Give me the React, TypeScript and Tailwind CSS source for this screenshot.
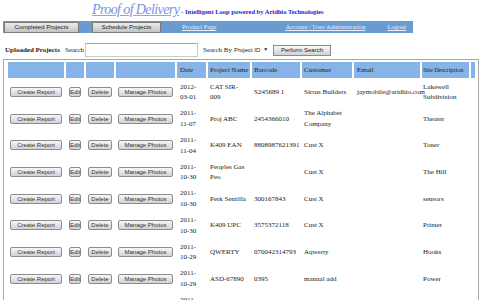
const serif = { fontFamily: '"Liberation Serif", "Times New Roman", serif' }

const projects = [
  { date: '2012-03-01', name: 'CAT SIR-\n009', barcode: 'S245689 1', customer: 'Sirrus Builders', email: 'jaymobile@aridhio.com', site: 'Lakewell Subdivision' },
  { date: '2011-11-07', name: 'Proj ABC', barcode: '2454366010', customer: 'The Alphabet Company', email: '', site: 'Theater' },
  { date: '2011-11-04', name: 'K409 EAN', barcode: '8808987621391', customer: 'Cust X', email: '', site: 'Toner' },
  { date: '2011-10-30', name: 'Peoples Gas Peo', barcode: '', customer: 'Cust X', email: '', site: 'The Hill' },
  { date: '2011-10-30', name: 'Perk Sentilla', barcode: '300167843', customer: 'Cust X', email: '', site: 'sensors' },
  { date: '2011-10-30', name: 'K409 UPC', barcode: '3575372118', customer: 'Cust X', email: '', site: 'Printer' },
  { date: '2011-10-29', name: 'QWERTY', barcode: '070042314793', customer: 'Aqwerty', email: '', site: 'Hooks' },
  { date: '2011-10-29', name: 'ASD-67890', barcode: '0395', customer: 'manual add', email: '', site: 'Power' },
  { date: '2011-10-28', name: 'Test Unit', barcode: '1234567', customer: 'Cust X', email: '', site: 'Lab' },
]

function GrayButton({ label, className }: { label: string; className: string }) {
  return (
    <button
      className={`h-[10px] p-0 rounded-[2px] border border-[#8c8c8c] bg-gradient-to-b from-[#f7f7f7] to-[#d2d2d2] text-[6px] leading-none text-[#333] font-['Liberation_Sans'] ${className}`}
    >
      {label}
    </button>
  )
}

function DateCell({ date }: { date: string }) {
  const [y, ...rest] = date.split('-')
  return (
    <>
      {y}-
      <br />
      {rest.join('-')}
    </>
  )
}

export default function App() {
  return (
    <div className="w-[480px] h-[300px] overflow-hidden bg-white text-[#222]" style={serif}>
      {/* Title */}
      <div className="h-[21px] pl-[92px] flex items-baseline">
        <span className="text-[14px] italic tracking-[-0.6px] text-[#7592dc] underline decoration-[#8fa8e2] underline-offset-[1px] leading-[19px]">
          Proof of Delivery
        </span>
        <span className="ml-[2px] text-[6.5px] font-bold text-[#2222cc]">- Intelligent Loop powered by Aridhio Technologies</span>
      </div>

      {/* Nav bar */}
      <div className="ml-[3px] w-[410px] h-[12px] bg-[#6a9bd0] flex items-center">
        <button className="ml-[1px] w-[75px] h-[11px] p-0 border border-[#7c7c7c] bg-gradient-to-b from-[#ececec] to-[#c4c4c4] text-[6.2px] leading-none text-[#222] font-['Liberation_Sans']">
          Completed Projects
        </button>
        <button className="ml-[13px] w-[69px] h-[11px] p-0 border border-[#7c7c7c] bg-gradient-to-b from-[#ececec] to-[#c4c4c4] text-[6.2px] leading-none text-[#222] font-['Liberation_Sans']">
          Schedule Projects
        </button>
        <a className="ml-[21px] text-[6.5px] text-[#e6eeff] underline">Product Page</a>
        <a className="ml-[69px] text-[6.5px] text-[#e6eeff] underline">Account / User Administration</a>
        <a className="ml-[22px] text-[6.5px] text-[#e6eeff] underline">Logout</a>
      </div>

      {/* Search row */}
      <div className="mt-[10px] h-[14px] flex items-center text-[7px]">
        <span className="ml-[5px] w-[60px] font-bold">Uploaded Projects</span>
        <span className="w-[20px]">Search</span>
        <div className="w-[113px] h-[14px] border border-[#c8c8c8] border-t-[#a8a8a8] bg-white" />
        <span className="ml-[5px] w-[29px]">Search By</span>
        <div className="w-[36px] h-[12px] flex items-center pl-[2px] bg-white text-[6px] whitespace-nowrap font-['Liberation_Sans'] text-[#222]">
          Project ID
          <span className="ml-[3px] text-[5px]">▼</span>
        </div>
        <button className="ml-[5px] w-[58px] h-[11px] p-0 border border-[#8c8c8c] bg-gradient-to-b from-[#f7f7f7] to-[#d2d2d2] text-[6px] leading-none text-[#222] font-['Liberation_Sans']">
          Perform Search
        </button>
      </div>

      {/* Table */}
      <div className="mt-[2px] ml-[3px] w-[476px] h-[300px] border-t border-l border-r border-[#a8a8a8] overflow-hidden">
        <table className="ml-[2px] w-[471px] table-fixed border-separate border-spacing-[2px] text-[7px] leading-[10.7px]">
          <colgroup>
            <col className="w-[56px]" />
            <col className="w-[18px]" />
            <col className="w-[28px]" />
            <col className="w-[59px]" />
            <col className="w-[29px]" />
            <col className="w-[42px]" />
            <col className="w-[48px]" />
            <col className="w-[50px]" />
            <col className="w-[66px]" />
            <col className="w-[47px]" />
            <col className="w-[4px]" />
          </colgroup>
          <thead>
            <tr className="bg-[#86b4e8]">
              <th className="h-[16px]" />
              <th />
              <th />
              <th />
              <th className="pl-[3px] text-left font-normal">Date</th>
              <th className="pl-[2px] text-left font-normal whitespace-nowrap">Project Name</th>
              <th className="pl-[2px] text-left font-normal">Barcode</th>
              <th className="pl-[2px] text-left font-normal">Customer</th>
              <th className="pl-[3px] text-left font-normal">Email</th>
              <th className="pl-[1px] text-left font-normal whitespace-nowrap text-[6.5px] tracking-[-0.1px]">Site Description</th>
              <th />
            </tr>
          </thead>
          <tbody>
            {projects.map((p, i) => (
              <tr key={i}>
                <td className="h-[24.67px] text-center">
                  <GrayButton label="Create Report" className="w-[52px]" />
                </td>
                <td className="text-center">
                  <GrayButton label="Edit" className="w-[12px]" />
                </td>
                <td className="text-center">
                  <GrayButton label="Delete" className="w-[24px]" />
                </td>
                <td className="text-center">
                  <GrayButton label="Manage Photos" className="w-[55px]" />
                </td>
                <td className="pl-[3px]">
                  <DateCell date={p.date} />
                </td>
                <td className="pl-[2px] whitespace-pre-line">{p.name}</td>
                <td className="pl-[2px] whitespace-nowrap">{p.barcode}</td>
                <td className="pl-[2px]">{p.customer}</td>
                <td className="pl-[3px] whitespace-nowrap">{p.email}</td>
                <td className="pl-[1px]">{p.site}</td>
                <td />
              </tr>
            ))}
          </tbody>
        </table>
      </div>
    </div>
  )
}
